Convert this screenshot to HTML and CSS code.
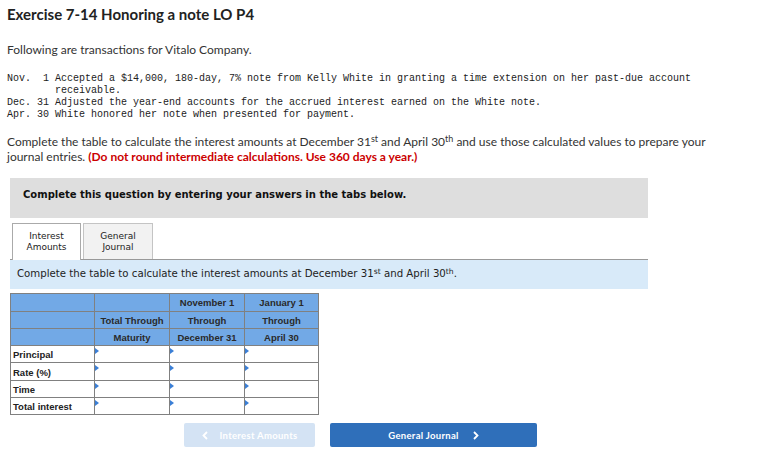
FILE: index.html
```
<!DOCTYPE html>
<html>
<head>
<meta charset="utf-8">
<link rel="stylesheet" href="styles.css">
</head>
<body>
<h1 class="title">Exercise 7-14 Honoring a note LO P4</h1>
<p class="intro">Following are transactions for Vitalo Company.</p>
<pre class="trans">Nov.  1 Accepted a $14,000, 180-day, 7% note from Kelly White in granting a time extension on her past-due account
        receivable.
Dec. 31 Adjusted the year-end accounts for the accrued interest earned on the White note.
Apr. 30 White honored her note when presented for payment.</pre>
<p class="question">Complete the table to calculate the interest amounts at December 31<sup>st</sup> and April 30<sup>th</sup> and use those calculated values to prepare your journal entries. <span class="red">(Do not round intermediate calculations. Use 360 days a year.)</span></p>
<div class="widget">
  <div class="banner">Complete this question by entering your answers in the tabs below.</div>
  <div class="tabs">
    <div class="tab active">Interest<br>Amounts</div>
    <div class="tab">General<br>Journal</div>
  </div>
  <div class="info">Complete the table to calculate the interest amounts at December 31<sup>st</sup> and April 30<sup>th</sup>.</div>
  <table class="grid">
    <colgroup><col class="c1"><col class="c2"><col class="c3"><col class="c4"></colgroup>
    <tr class="h1r"><th></th><th></th><th>November 1</th><th>January 1</th></tr>
    <tr class="h2r"><th></th><th>Total Through</th><th>Through</th><th>Through</th></tr>
    <tr class="h3r"><th></th><th>Maturity</th><th>December 31</th><th>April 30</th></tr>
    <tr class="r1"><td class="lbl">Principal</td><td class="in"></td><td class="in"></td><td class="in"></td></tr>
    <tr class="r2"><td class="lbl">Rate (%)</td><td class="in"></td><td class="in"></td><td class="in"></td></tr>
    <tr class="r3"><td class="lbl">Time</td><td class="in"></td><td class="in"></td><td class="in"></td></tr>
    <tr class="r4"><td class="lbl">Total interest</td><td class="in"></td><td class="in"></td><td class="in"></td></tr>
  </table>
  <div class="nav">
    <div class="btn prev"><svg class="chev" width="6" height="9" viewBox="0 0 6 9"><polyline points="5,1 1.5,4.5 5,8" fill="none" stroke="#fff" stroke-width="1.8"/></svg>Interest Amounts</div>
    <div class="btn next">General Journal<svg class="chev right" width="6" height="9" viewBox="0 0 6 9"><polyline points="1,1 4.5,4.5 1,8" fill="none" stroke="#fff" stroke-width="1.8"/></svg></div>
  </div>
</div>
</body>
</html>
```

FILE: styles.css
```
html, body {
  margin: 0;
  padding: 0;
  background: #fff;
}
body {
  padding: 6px 7px 0 7px;
  font-family: Lato, "Open Sans", sans-serif;
  color: #333;
}
.title {
  margin: 0;
  font-size: 15px;
  line-height: 17px;
  font-weight: 700;
  color: #222;
}
.intro {
  margin: 20px 0 0 0;
  font-size: 12px;
  line-height: 14px;
}
.trans {
  margin: 16px 0 0 0;
  font-family: "Liberation Mono", monospace;
  font-size: 10px;
  line-height: 12px;
  color: #222;
}
.question {
  margin: 13px 0 0 0;
  width: 718px;
  font-size: 12px;
  line-height: 15px;
}
sup {
  font-size: 0.75em;
  line-height: 0;
  vertical-align: 0.45em;
}
.red {
  color: #cc0000;
  font-weight: 700;
}
.widget {
  margin: 14px 0 0 3px;
  width: 638px;
}
.banner {
  height: 40px;
  box-sizing: border-box;
  background: #dedede;
  padding: 10px 0 0 13px;
  font-family: "DejaVu Sans", Verdana, sans-serif;
  font-weight: 700;
  font-size: 10px;
  line-height: 14px;
  color: #111;
}
.tabs {
  display: flex;
  gap: 2px;
  margin: 5px 0 0 2px;
}
.tab {
  width: 70px;
  height: 36px;
  box-sizing: border-box;
  border: 1px solid #c4c4c4;
  border-bottom: none;
  background: #f2f2f2;
  text-align: center;
  font-family: "DejaVu Sans", Verdana, sans-serif;
  font-size: 9px;
  line-height: 11px;
  padding-top: 7px;
  color: #222;
}
.tab.active {
  width: 69px;
  background: #fff;
  border-color: #aaa;
  position: relative;
  height: 37px;
  margin-bottom: -1px;
}
.info {
  height: 30px;
  box-sizing: border-box;
  border-top: 1px solid #999;
  background: #d8eaf9;
  padding: 7px 0 0 7px;
  font-family: "DejaVu Sans", Verdana, sans-serif;
  font-size: 10.2px;
  line-height: 14px;
  color: #222;
}
.grid {
  margin-top: 4px;
  border-collapse: collapse;
  font-family: "Liberation Sans", Arial, sans-serif;
  font-size: 9.5px;
  font-weight: 700;
  table-layout: fixed;
  width: 308px;
}
.c1 { width: 84px; }
.c2 { width: 75px; }
.c3 { width: 75px; }
.c4 { width: 74px; }
.grid th, .grid td {
  border: 1px solid #808080;
  padding: 0;
}
.grid th {
  background: #72a9e6;
  color: #2a2a2a;
  text-align: center;
  font-weight: 700;
}
.h1r { height: 18px; }
.h2r { height: 17px; }
.h3r { height: 17px; }
.r1 { height: 17px; }
.r2 { height: 18px; }
.r3 { height: 17px; }
.r4 { height: 17px; }
.grid td.lbl {
  padding: 1px 0 0 2px;
  color: #222;
  vertical-align: middle;
}
.grid td.in {
  position: relative;
}
.grid td.in::before {
  content: "";
  position: absolute;
  left: 0;
  top: 2px;
  border-left: 4px solid #3b7fd6;
  border-top: 3px solid transparent;
  border-bottom: 3px solid transparent;
}
.nav {
  display: flex;
  gap: 15px;
  margin: 8px 0 0 174px;
}
.btn {
  height: 24px;
  box-sizing: border-box;
  border-radius: 2px;
  display: flex;
  align-items: center;
  justify-content: center;
  font-family: Lato, sans-serif;
  font-weight: 700;
  font-size: 9.5px;
  letter-spacing: 0.3px;
  color: #fff;
}
.btn.prev {
  width: 131px;
  background: #d4e3f4;
}
.btn.next {
  width: 207px;
  background: #2f6fba;
}
.chev {
  margin-right: 12px;
}
.chev.right {
  margin-right: 0;
  margin-left: 14px;
}
```
